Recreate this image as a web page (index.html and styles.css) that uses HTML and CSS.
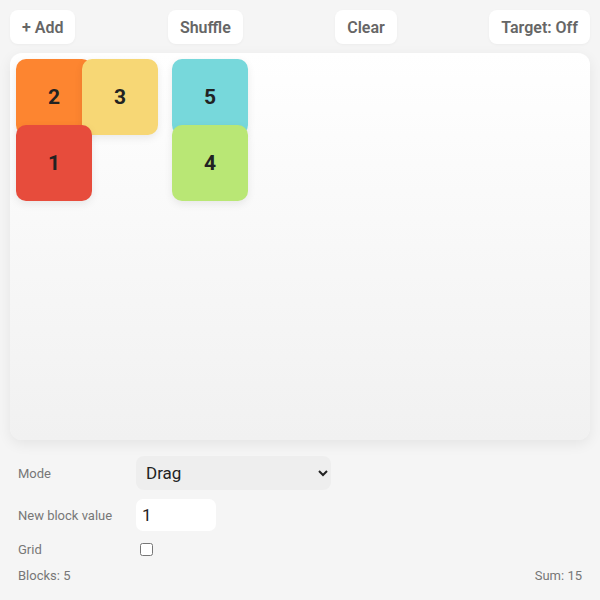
FILE: index.html
```html
<!DOCTYPE html>
<html>
<head>
<meta charset="utf-8">
<link rel="stylesheet" href="styles.css">
</head>
<body>
<div class="app">
  <div class="toolbar">
    <button class="btn">+ Add</button>
    <button class="btn">Shuffle</button>
    <button class="btn">Clear</button>
    <button class="btn">Target: Off</button>
  </div>
  <div class="canvas">
    <div class="block b2">2</div>
    <div class="block b3">3</div>
    <div class="block b5">5</div>
    <div class="block b1">1</div>
    <div class="block b4">4</div>
  </div>
  <div class="controls">
    <label class="lbl">Mode</label>
    <div class="ctl"><select class="sel"><option>Drag</option></select></div>
    <label class="lbl">New block value</label>
    <div class="ctl"><input class="num" type="text" value="1"></div>
    <label class="lbl">Grid</label>
    <div class="ctl"><input class="chk" type="checkbox"></div>
  </div>
  <div class="status">
    <span>Blocks: 5</span>
    <span>Sum: 15</span>
  </div>
</div>
</body>
</html>
```
FILE: styles.css
```css
html, body {
  margin: 0;
  padding: 0;
  background: #f5f5f5;
  font-family: Roboto, "Liberation Sans", sans-serif;
}
.app {
  padding: 10px;
}
.toolbar {
  display: flex;
  justify-content: space-between;
  height: 34px;
}
.btn {
  border: none;
  background: #fff;
  border-radius: 8px;
  padding: 0 12px;
  height: 34px;
  font-family: Roboto, "Liberation Sans", sans-serif;
  font-size: 16px;
  font-weight: 600;
  color: #666;
  box-shadow: 0 1px 3px rgba(0,0,0,0.04);
}
.canvas {
  position: relative;
  margin-top: 9px;
  height: 387px;
  border-radius: 12px;
  background: linear-gradient(#ffffff, #f1f1f1);
  box-shadow: 0 4px 14px rgba(0,0,0,0.07);
}
.block {
  position: absolute;
  width: 76px;
  height: 76px;
  border-radius: 10px;
  display: flex;
  align-items: center;
  justify-content: center;
  font-size: 21px;
  font-weight: 700;
  color: #222;
  box-shadow: 0 3px 8px rgba(0,0,0,0.08);
}
.b2 { left: 6px; top: 6px; background: #fd8530; }
.b3 { left: 72px; top: 6px; background: #f7d775; }
.b5 { left: 162px; top: 6px; background: #77d8db; }
.b1 { left: 6px; top: 72px; background: #e74c3c; }
.b4 { left: 162px; top: 72px; background: #b9e775; }
.controls {
  display: grid;
  grid-template-columns: 118px 1fr;
  align-items: center;
  row-gap: 9px;
  margin-top: 16px;
  padding: 0 8px;
}
.lbl {
  font-size: 13px;
  color: #777;
}
.ctl {
  display: flex;
}
.sel {
  width: 195px;
  height: 34px;
  border: none;
  border-radius: 8px;
  background: #eeeeee;
  font-family: Roboto, "Liberation Sans", sans-serif;
  font-size: 17px;
  color: #222;
  padding: 0 6px;
}
.num {
  width: 80px;
  height: 32px;
  box-sizing: border-box;
  border: none;
  border-radius: 7px;
  background: #fff;
  font-family: Roboto, "Liberation Sans", sans-serif;
  font-size: 17px;
  color: #222;
  padding: 0 6px;
  outline: none;
}
.chk {
  width: 13px;
  height: 13px;
  margin: 3px 3px 3px 4px;
}
.status {
  display: flex;
  justify-content: space-between;
  padding: 9px 8px 0;
  font-size: 13px;
  color: #777;
}
```
